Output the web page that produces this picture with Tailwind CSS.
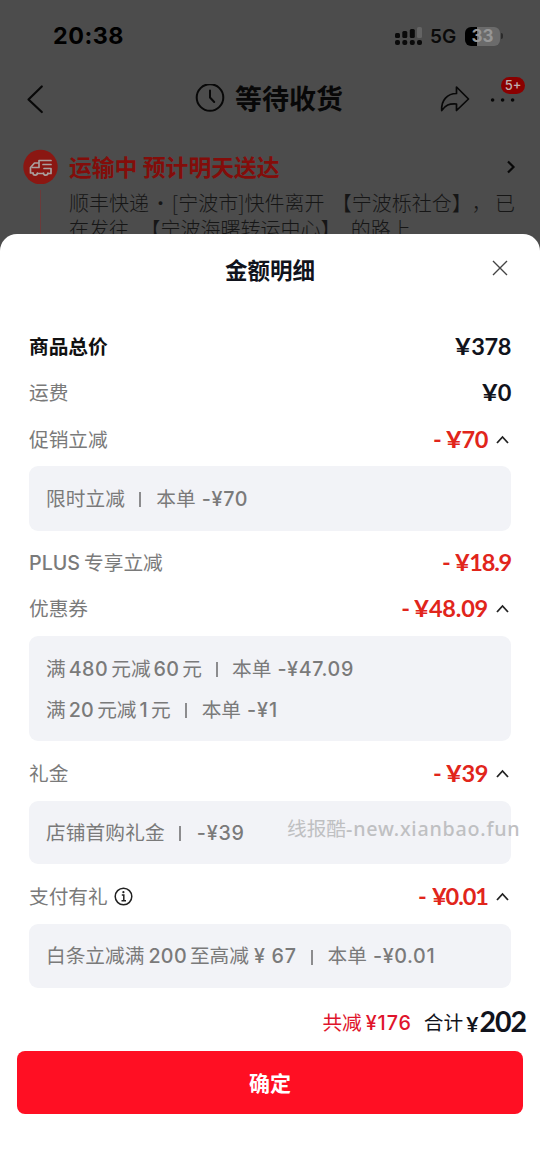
<!DOCTYPE html>
<html lang="zh-CN">
<head>
<meta charset="utf-8">
<title>金额明细</title>
<script src="https://cdn.jsdelivr.net/npm/@tailwindcss/browser@4"></script>
</head>
<body class="bg-[#4c4c4c]">
<div class="relative flex h-[1168px] w-[540px] flex-col overflow-hidden bg-[#4c4c4c] font-['Inter','Noto_Sans_CJK_SC',sans-serif]">

  <div class="h-[234px] shrink-0 overflow-hidden">
    <!-- status bar -->
    <div class="flex h-[72px] items-center justify-between pr-[37px] pl-[53px]">
      <span class="text-[23.300px] font-bold leading-none tracking-[0.500px]">20:38</span>
      <div class="flex items-center">
        <svg width="28" height="20" viewBox="0 0 28 20" fill="#0a0a0a">
          <rect x="0" y="7" width="5" height="5" rx="1.5"/><rect x="7.3" y="5" width="5" height="7" rx="1.5"/><rect x="14.8" y="3" width="5" height="9" rx="1.5"/><rect x="22" y="1" width="5" height="11" rx="1.5" fill="#646464"/>
          <rect x="0" y="14" width="5" height="5" rx="2"/><rect x="7.3" y="14" width="5" height="5" rx="2"/><rect x="14.8" y="14" width="5" height="5" rx="2"/><rect x="22" y="14" width="5" height="5" rx="2"/>
        </svg>
        <span class="ml-[7px] w-[27px] pt-px text-[19px] font-semibold leading-none text-[#0a0a0a]">5G</span>
        <div class="ml-[8px] flex h-[19px] w-[35px] items-center justify-center rounded-[6px] bg-linear-to-r from-black from-35% to-[#6b6b6b] to-35% pt-px text-[17px] font-bold leading-none text-[#969696]">33</div>
        <div class="ml-px h-[6px] w-[2px] rounded-r-full bg-[#2a2a2a]"></div>
      </div>
    </div>
    <!-- navigation bar -->
    <div class="relative flex h-[54px] items-center">
      <svg class="ml-[26px]" width="18" height="30" viewBox="0 0 18 30" fill="none" stroke="#080808" stroke-width="2.2" stroke-linecap="round" stroke-linejoin="round"><path d="M15.800 2.500 2.500 15.500 15.800 28"/></svg>
      <svg class="ml-[151px]" width="30" height="30" viewBox="0 0 30 30" fill="none" stroke="#080808" stroke-width="2" stroke-linecap="round" stroke-linejoin="round"><circle cx="15" cy="13.500" r="13.300"/><path d="M15 6.500V13.500L19.200 18"/></svg>
      <h1 class="ml-[10px] w-[110px] whitespace-nowrap text-[27px] font-bold leading-none text-[#080808]">等待收货</h1>
      <svg class="ml-[95px]" width="30" height="28" viewBox="0 0 30 28" fill="none" stroke="#080808" stroke-width="1.700" stroke-linejoin="round"><path d="M16.500 2 28.500 14 16.500 25.500V19C9 18.500 5.500 20 1.700 25.500 1 15 7.500 8.500 16.500 8.500Z"/></svg>
      <svg class="ml-[20px] mt-px" width="26" height="6" viewBox="0 0 26 6" fill="#080808"><circle cx="2.600" cy="3" r="1.800"/><circle cx="12.600" cy="3" r="1.800"/><circle cx="22.600" cy="3" r="1.800"/></svg>
      <span class="absolute top-[5px] left-[501px] flex h-[17px] w-[24px] items-center justify-center rounded-full bg-[#8a0000] text-[13px] font-medium text-[#c0b0b0]">5+</span>
    </div>
    <!-- delivery progress -->
    <div class="flex pt-[23px] pl-[23px]">
      <div class="flex w-[35px] flex-col items-center">
        <svg width="35" height="35" viewBox="0 0 35 35" fill="none" stroke="#aaa09e" stroke-width="1.700" stroke-linejoin="round" stroke-linecap="round"><circle cx="17.500" cy="18" r="17.200" fill="#8b1712" stroke="none"/><path d="M16 18.500H9.500M16 14H11.500L7.500 18.500V24H10M14.500 24.500H20M16 18.500V11.500H28M28 15.500H20M21 19.500H28V24.500H25"/><path d="M10 24a2.200 2.200 0 0 0 4.400 0M20.500 24a2.200 2.200 0 0 0 4.400 0"/></svg>
        <div class="mt-[6px] h-[60px] w-px bg-[#6b3a3a]"></div>
      </div>
      <div class="ml-[11px]">
        <div class="flex h-[36px] w-[447px] items-center justify-between">
          <b class="whitespace-nowrap pt-[2px] text-[22.800px] font-bold leading-none text-[#830d0a]">运输中 预计明天送达</b>
          <svg width="10" height="14" viewBox="0 0 10 14" fill="none" stroke="#080808" stroke-width="2.200"><path d="M2 1.500 7.500 7 2 12.500"/></svg>
        </div>
        <p class="mt-[5px] whitespace-nowrap font-['Noto_Sans_CJK_SC',sans-serif] text-[20px] leading-[26px] font-light text-[#161616] [text-spacing-trim:space-all]">顺丰快递<span class="mx-[-3px]"> · </span>[宁波市]快件离开<span class="ml-[3px]"> 【宁波栎社仓】，</span><span class="ml-[3px]">已</span><br>在发往<span class="ml-[7px]"> 【宁波海曙转运中心】</span><span class="ml-[6px]"> 的路上</span></p>
      </div>
    </div>
  </div>

  <!-- amount details sheet -->
  <section class="flex h-[934px] shrink-0 flex-col rounded-t-[17px] bg-white">
    <header class="relative flex h-[74px] shrink-0 items-center justify-center">
      <h2 class="text-[22.5px] font-bold leading-none text-[#11131c]">金额明细</h2>
      <svg class="absolute top-[26px] left-[492px]" width="16" height="16" viewBox="0 0 16 16" stroke="#444" stroke-width="1.400"><path d="M1 1 15 15M15 1 1 15"/></svg>
    </header>

    <div class="mt-[16px] flex flex-col pr-[29px] pl-[29px] text-[19.700px] leading-none text-[#7a7a7a]">
      <div class="flex h-[47px] items-center justify-between"><b class="text-[#111]">商品总价</b><span class="-mt-[2px] font-['Lato'] text-[23.500px] font-bold tracking-[-0.400px] text-[#11131c]"><span class="mr-[2.800px] inline-block origin-left scale-x-[1.150]">¥</span>378</span></div>
      <div class="flex h-[46px] items-center justify-between"><span>运费</span><span class="-mt-[2px] font-['Lato'] text-[23.500px] font-bold tracking-[-0.400px] text-[#11131c]"><span class="mr-[2.800px] inline-block origin-left scale-x-[1.150]">¥</span>0</span></div>
      <div class="flex h-[47px] items-center"><span>促销立减</span><span class="-mt-[2px] ml-auto font-['Lato'] text-[23.500px] font-bold tracking-[-0.400px] text-[#e1251b]">-<span class="tracking-[-1.500px]"> </span><span class="mr-[2.800px] inline-block origin-left scale-x-[1.150]">¥</span>70</span><svg class="-mt-[2px] mr-px ml-[7px]" width="15" height="10" viewBox="0 0 15 10" fill="none" stroke="#222" stroke-width="1.800"><path d="M2 8 7.500 2 13 8"/></svg></div>
      <div class="mt-[2px] flex h-[65px] items-center rounded-[9px] bg-[#f2f3f7] pt-[2px] pl-[17px] tracking-[0.100px]"><span>限时立减</span><i class="mr-[15px] ml-[14px] h-[15px] w-[2px] bg-[#8c8c8e]"></i><span>本单</span><span class="ml-[6px] font-medium tracking-[0.700px]">-¥70</span></div>

      <div class="mt-[10px] flex h-[46px] items-center"><span class="mr-[4px] font-medium">PLUS</span><span>专享立减</span><span class="-mt-[2px] ml-auto font-['Lato'] text-[23.500px] font-bold tracking-[-1.200px] text-[#e1251b]">-<span class="tracking-normal"> </span><span class="mr-[1.500px] inline-block origin-left scale-x-[1.080]">¥</span>18.9</span></div>
      <div class="flex h-[46px] items-center"><span>优惠券</span><span class="-mt-[2px] ml-auto font-['Lato'] text-[23.500px] font-bold tracking-[-0.200px] text-[#e1251b]">-<span class="tracking-[-1.500px]"> </span><span class="mr-[1.400px] inline-block origin-left scale-x-[1.100]">¥</span>48.09</span><svg class="-mt-[2px] mr-px ml-[7px]" width="15" height="10" viewBox="0 0 15 10" fill="none" stroke="#222" stroke-width="1.800"><path d="M2 8 7.500 2 13 8"/></svg></div>
      <div class="mt-[3px] flex h-[105px] flex-col justify-center rounded-[9px] bg-[#f2f3f7] pt-[3px] pl-[17px]">
        <div class="flex h-[41px] items-center"><span>满</span><span class="mx-[3px] font-medium tracking-[0.500px]">480</span><span>元减</span><span class="mx-[3px] font-medium tracking-[0.300px]">60</span><span>元</span><i class="mx-[14px] h-[15px] w-[2px] bg-[#8c8c8e]"></i><span>本单</span><span class="ml-[6px] font-medium tracking-[0.600px]">-¥47.09</span></div>
        <div class="flex h-[41px] items-center"><span>满</span><span class="mx-[3px] font-medium tracking-[0.300px]">20</span><span>元减</span><span class="mx-[3px] font-medium tracking-[0.300px]">1</span><span>元</span><i class="mr-[15px] ml-[14px] h-[15px] w-[2px] bg-[#8c8c8e]"></i><span>本单</span><span class="ml-[6px] font-medium tracking-[0.900px]">-¥1</span></div>
      </div>

      <div class="mt-[11px] flex h-[46px] items-center"><span>礼金</span><span class="-mt-[2px] ml-auto font-['Lato'] text-[23.500px] font-bold tracking-[-0.400px] text-[#e1251b]">-<span class="tracking-[-1.500px]"> </span><span class="mr-[2.800px] inline-block origin-left scale-x-[1.150]">¥</span>39</span><svg class="-mt-[2px] mr-px ml-[7px]" width="15" height="10" viewBox="0 0 15 10" fill="none" stroke="#222" stroke-width="1.800"><path d="M2 8 7.500 2 13 8"/></svg></div>
      <div class="mt-[3px] flex h-[63px] items-center rounded-[9px] bg-[#f2f3f7] pt-[2px] pl-[17px] tracking-[0.100px]"><span>店铺首购礼金</span><i class="mr-[16px] ml-[14px] h-[15px] w-[2px] bg-[#8c8c8e]"></i><span class="font-medium tracking-[0.800px]">-¥39</span></div>

      <div class="mt-[11px] flex h-[46px] items-center"><span>支付有礼</span><svg class="-mt-[3px] ml-[6px]" width="19" height="19" viewBox="0 0 19 19" fill="none" stroke="#222" stroke-width="1.500"><circle cx="9.500" cy="9.500" r="8.300"/><path d="M7.800 8H9.800V13.500M7.500 13.700H12"/><circle cx="9.400" cy="5.200" r="1.100" fill="#222" stroke="none"/></svg><span class="-mt-[2px] ml-auto font-['Lato'] text-[23.500px] font-bold tracking-[-1px] text-[#e1251b]">-<span class="tracking-normal"> </span><span class="mr-[1.300px] inline-block origin-left scale-x-[1.080]">¥</span>0.01</span><svg class="-mt-[2px] mr-px ml-[7px]" width="15" height="10" viewBox="0 0 15 10" fill="none" stroke="#222" stroke-width="1.800"><path d="M2 8 7.500 2 13 8"/></svg></div>
      <div class="mt-[3px] flex h-[64px] items-center rounded-[9px] bg-[#f2f3f7] pt-[2px] pl-[17px]"><span>白条立减满</span><span class="mr-[3px] ml-[4px] font-medium tracking-[0.300px]">200</span><span>至高减</span><span class="ml-[5px] font-medium tracking-[0.700px]">¥ 67</span><i class="mr-[15px] ml-[14px] h-[15px] w-[2px] bg-[#8c8c8e]"></i><span>本单</span><span class="ml-[6px] font-medium tracking-[0.600px]">-¥0.01</span></div>
    </div>

    <footer class="px-[17px]">
      <div class="-mr-[3px] flex h-[63px] items-center justify-end pt-[8px] text-[19.700px] leading-none">
        <span class="text-[#e0142c]">共减</span><span class="ml-[4px] font-medium tracking-[0.900px] text-[#e0142c]">¥176</span>
        <span class="ml-[12px] text-[#11131c]">合计</span><span class="ml-[3px] font-['Lato'] text-[21px] font-bold text-[#11131c]">¥</span><span class="-mt-[4px] ml-px font-['Lato'] text-[28.500px] font-bold tracking-[-1px] text-[#11131c]">202</span>
      </div>
      <button class="flex h-[63px] w-full items-center justify-center rounded-[8px] bg-[#ff0f23] pt-[2px] text-[21px] font-bold leading-none text-white">确定</button>
    </footer>
  </section>

  <span class="absolute top-[818px] left-[287px] whitespace-nowrap font-['Noto_Sans','Noto_Sans_CJK_SC',sans-serif] text-[19.700px] leading-[22px] text-[#bfc0c2]">线报酷<span class="font-medium tracking-[0.760px]">-new.xianbao.fun</span></span>
</div>
</body>
</html>
